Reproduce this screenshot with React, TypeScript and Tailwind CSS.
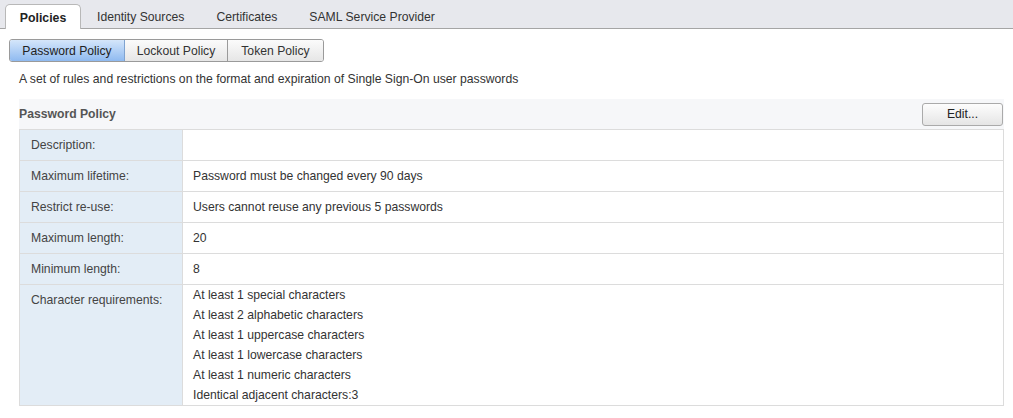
import React from "react";

const rows: { label: string; values: string[] }[] = [
  { label: "Description:", values: [] },
  { label: "Maximum lifetime:", values: ["Password must be changed every 90 days"] },
  { label: "Restrict re-use:", values: ["Users cannot reuse any previous 5 passwords"] },
  { label: "Maximum length:", values: ["20"] },
  { label: "Minimum length:", values: ["8"] },
  {
    label: "Character requirements:",
    values: [
      "At least 1 special characters",
      "At least 2 alphabetic characters",
      "At least 1 uppercase characters",
      "At least 1 lowercase characters",
      "At least 1 numeric characters",
      "Identical adjacent characters:3",
    ],
  },
];

export default function App() {
  return (
    <div className="w-[1013px] h-[418px] bg-white text-[12.2px] leading-[18px] text-[#333] overflow-hidden" style={{ fontFamily: '"Liberation Sans", Arial, sans-serif' }}>
      {/* Top tabs */}
      <div className="h-[29px] bg-[#e7e8ed] border-b border-[#a5a5a5] flex items-end pl-[5px]">
        <div className="h-[25px] w-[76px] pt-[2px] bg-white border border-b-0 border-[#b8b8b8] rounded-t-[5px] flex items-center justify-center text-[12.3px] text-[#222] font-semibold -mb-px">
          Policies
        </div>
        <div className="h-[25px] pt-[2px] px-[16px] flex items-center text-[12.2px] text-[#333]">Identity Sources</div>
        <div className="h-[25px] pt-[2px] px-[16px] flex items-center text-[12.2px] text-[#333]">Certificates</div>
        <div className="h-[25px] pt-[2px] px-[16px] flex items-center text-[12.2px] text-[#333]">SAML Service Provider</div>
      </div>

      {/* Sub tabs */}
      <div className="pl-[9px] pt-[10px] flex">
        <div className="flex h-[23px] rounded-[3px] border border-[#9a9a9a] overflow-hidden">
          <div className="w-[115px] flex items-center justify-center bg-gradient-to-b from-[#d5e6fa] to-[#8fbaf0] text-[#222] border-r border-[#7fa3d0]">
            Password Policy
          </div>
          <div className="w-[103px] flex items-center justify-center bg-gradient-to-b from-[#fbfbfb] to-[#e6e6e6] text-[#333] border-r border-[#9a9a9a]">
            Lockout Policy
          </div>
          <div className="w-[95px] flex items-center justify-center bg-gradient-to-b from-[#fbfbfb] to-[#e6e6e6] text-[#333]">
            Token Policy
          </div>
        </div>
      </div>

      <div className="pl-[19px] pt-[9px] h-[37px] leading-[16px] text-[#333]">
        A set of rules and restrictions on the format and expiration of Single Sign-On user passwords
      </div>

      {/* Section */}
      <div className="mx-[19px] w-[985px]">
        <div className="h-[30px] bg-[#f6f7f9] flex items-center justify-between">
          <span className="font-bold text-[#555]">Password Policy</span>
          <button className="h-[23px] w-[81px] mr-[1px] rounded-[3px] border border-[#aaa] bg-gradient-to-b from-[#fdfdfd] to-[#e5e5e5] text-[#222] flex items-center justify-center">
            Edit...
          </button>
        </div>
        <div className="border border-[#dcdcdc]">
          {rows.map((r, i) => (
            <div key={i} className={`flex ${i > 0 ? "border-t border-[#dcdcdc]" : ""}`}>
              <div className="w-[163px] shrink-0 bg-[#e3edf6] border-r border-[#dcdcdc] pl-[11px] pt-[6px] min-h-[30px] text-[#444]">
                {r.label}
              </div>
              <div className="flex-1 pl-[10px] text-[#333]">
                {r.values.length === 0 ? (
                  <div className="h-[30px]" />
                ) : r.values.length === 1 ? (
                  <div className="h-[30px] flex items-center">{r.values[0]}</div>
                ) : (
                  <div>
                    {r.values.map((v, j) => (
                      <div key={j} className="h-[20px] flex items-center">{v}</div>
                    ))}
                  </div>
                )}
              </div>
            </div>
          ))}
        </div>
      </div>
    </div>
  );
}
